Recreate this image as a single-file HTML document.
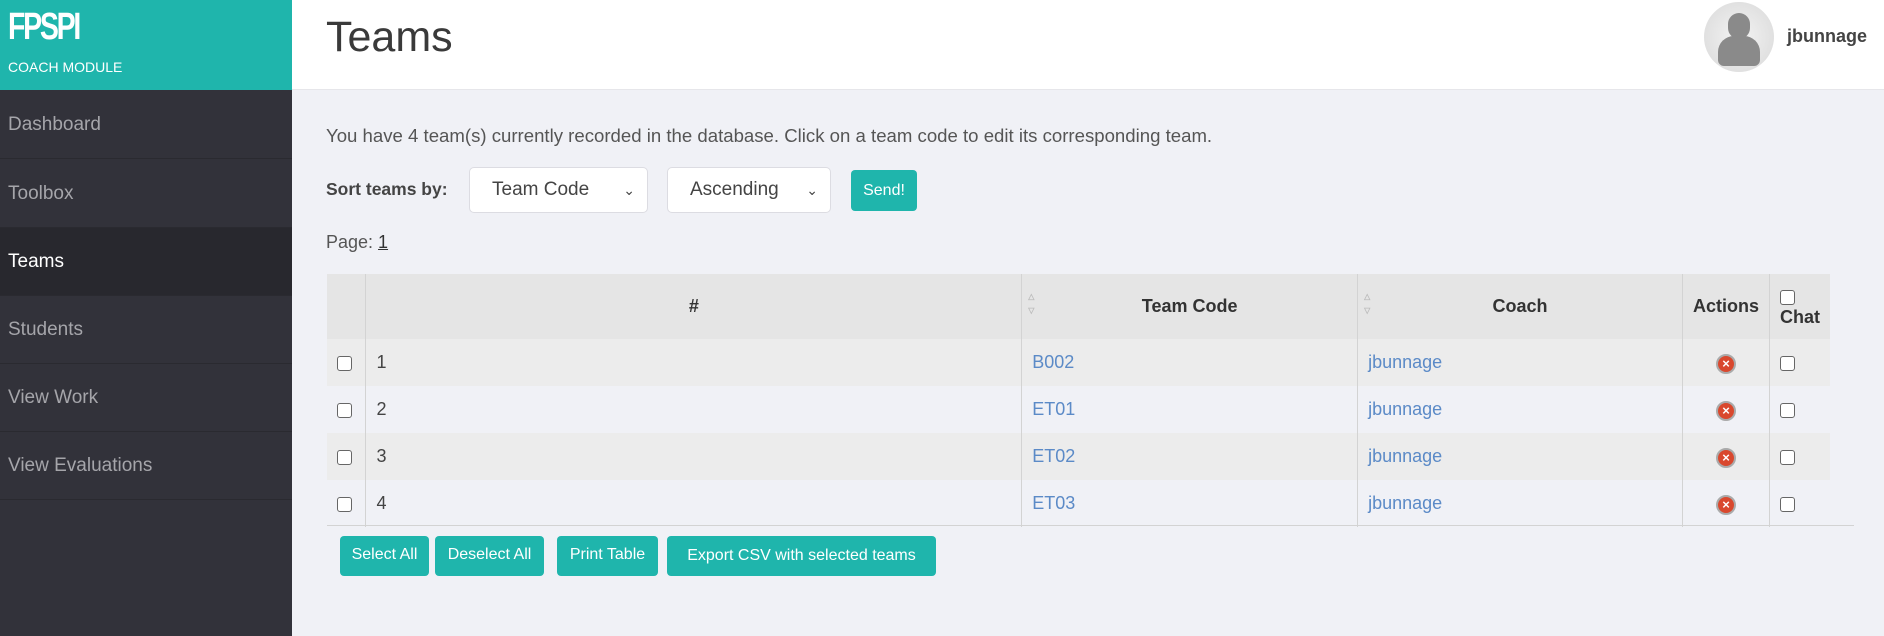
<!DOCTYPE html>
<html><head><meta charset="utf-8"><style>
*{box-sizing:border-box;margin:0;padding:0}
body{width:1884px;height:636px;overflow:hidden;background:#f0f1f6;font-family:"Liberation Sans",sans-serif;position:relative;color:#444}
.a{position:absolute}
#side{left:0;top:0;width:292px;height:636px;background:#32323a}
#brand{left:0;top:0;width:292px;height:90px;background:#1fb5ac;color:#fff}
.nav{left:0;width:292px;height:68px;border-bottom:1px solid #2a2a30;color:#a5a5aa;font-size:19px;padding-left:8px;line-height:68px}
#hdr{left:292px;top:0;width:1592px;height:90px;background:#fff;border-bottom:1px solid #e6e6ea}
.sel{background:#fff;border:1px solid #dcdce2;border-radius:5px;height:46px;font-size:19px;color:#444;line-height:44px}
.btn{background:#1fb5ac;color:#fff;border-radius:4px;font-size:16px;text-align:center}
table{border-collapse:collapse;font-size:18px}
td,th{height:47px;padding:0 10px}
th{height:65px;background:#e5e5e5;color:#333;font-size:18px}
.vl{border-left:1px solid #d3d3d3}
tr.o td{background:#ececec}
a{color:#5b8ac7;text-decoration:none}
.cb{display:inline-block;width:15px;height:15px;border:1.5px solid #666;border-radius:3px;background:#fff;vertical-align:middle}
.x{display:inline-block;width:20px;height:20px;border-radius:50%;background:#d9482e;border:2px solid #aaa;color:#fff;font-size:13px;font-weight:bold;line-height:16px;text-align:center}
.sort{position:absolute;left:6px;top:16px;font-size:8px;color:#bbb;line-height:14px}
</style></head><body>
<div id="side" class="a"></div>
<div id="brand" class="a">
<div class="a" style="left:8px;top:6px;font-size:38px;font-weight:bold;letter-spacing:-3px;transform:scaleX(0.75);transform-origin:left">FPSPI</div>
<div class="a" style="left:8px;top:59px;font-size:14px">COACH MODULE</div>
</div>
<div class="a nav" style="top:91px">Dashboard</div>
<div class="a nav" style="top:160px">Toolbox</div>
<div class="a nav" style="top:228px;background:#28282e;color:#fff">Teams</div>
<div class="a nav" style="top:296px">Students</div>
<div class="a nav" style="top:364px">View Work</div>
<div class="a nav" style="top:432px">View Evaluations</div>
<div id="hdr" class="a"></div>
<div class="a" style="left:326px;top:13px;font-size:43px;color:#3a3a3a;font-weight:300">Teams</div>
<div class="a" style="left:1704px;top:2px;width:70px;height:70px;border-radius:50%;background:radial-gradient(circle,#f4f4f4,#d8d8d8);overflow:hidden">
<div class="a" style="left:24px;top:11px;width:22px;height:26px;border-radius:11px;background:#8a8a8a"></div>
<div class="a" style="left:14px;top:34px;width:42px;height:30px;border-radius:16px 16px 6px 6px;background:#8a8a8a"></div></div>
<div class="a" style="left:1787px;top:26px;font-size:18px;font-weight:bold;color:#444">jbunnage</div>
<div class="a" style="left:326px;top:125px;font-size:18.6px;color:#555">You have 4 team(s) currently recorded in the database. Click on a team code to edit its corresponding team.</div>
<div class="a" style="left:326px;top:179px;font-size:17.5px;font-weight:bold;color:#444">Sort teams by:</div>
<div class="a sel" style="left:469px;top:167px;width:179px;padding-left:22px">Team Code<span class="a" style="right:12px;top:0;font-size:14px">&#8964;</span></div>
<div class="a sel" style="left:667px;top:167px;width:164px;padding-left:22px">Ascending<span class="a" style="right:12px;top:0;font-size:14px">&#8964;</span></div>
<div class="a btn" style="left:851px;top:170px;width:66px;height:41px;line-height:41px">Send!</div>
<div class="a" style="left:326px;top:232px;font-size:18px;color:#555">Page: <u style="color:#333">1</u></div>
<div class="a" style="left:327px;top:274px;width:1527px;height:252px;border-bottom:1px solid #d3d3d3"></div>
<table class="a" style="left:327px;top:274px;width:1503px">
<tr><th style="width:39px"></th><th class="vl" style="width:656px">#</th><th class="vl" style="width:336px;position:relative"><span class="sort">&#9651;<br>&#9661;</span>Team Code</th><th class="vl" style="width:325px;position:relative"><span class="sort">&#9651;<br>&#9661;</span>Coach</th><th class="vl" style="width:87px;padding:0">Actions</th><th class="vl" style="text-align:left;padding:0 10px;line-height:20px"><span class="cb"></span><br>Chat</th></tr>
<tr class="o"><td><span class="cb"></span></td><td class="vl">1</td><td class="vl"><a>B002</a></td><td class="vl"><a>jbunnage</a></td><td class="vl" style="text-align:center"><span class="x">×</span></td><td class="vl"><span class="cb"></span></td></tr>
<tr><td><span class="cb"></span></td><td class="vl">2</td><td class="vl"><a>ET01</a></td><td class="vl"><a>jbunnage</a></td><td class="vl" style="text-align:center"><span class="x">×</span></td><td class="vl"><span class="cb"></span></td></tr>
<tr class="o"><td><span class="cb"></span></td><td class="vl">3</td><td class="vl"><a>ET02</a></td><td class="vl"><a>jbunnage</a></td><td class="vl" style="text-align:center"><span class="x">×</span></td><td class="vl"><span class="cb"></span></td></tr>
<tr><td><span class="cb"></span></td><td class="vl">4</td><td class="vl"><a>ET03</a></td><td class="vl"><a>jbunnage</a></td><td class="vl" style="text-align:center"><span class="x">×</span></td><td class="vl"><span class="cb"></span></td></tr>
</table>
<div class="a btn" style="left:340px;top:536px;width:89px;height:40px;line-height:38px">Select All</div>
<div class="a btn" style="left:435px;top:536px;width:109px;height:40px;line-height:38px">Deselect All</div>
<div class="a btn" style="left:557px;top:536px;width:101px;height:40px;line-height:38px">Print Table</div>
<div class="a btn" style="left:667px;top:536px;width:269px;height:40px;line-height:40px">Export CSV with selected teams</div>
</body></html>
